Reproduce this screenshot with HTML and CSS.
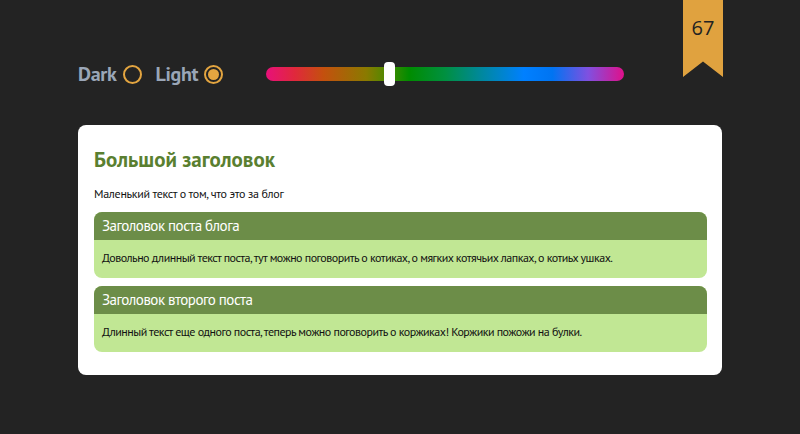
FILE: index.html
```html
<!DOCTYPE html>
<html lang="ru">
<head>
<meta charset="utf-8">
<link rel="stylesheet" href="styles.css">
</head>
<body>
<div class="bookmark">67</div>
<header class="controls">
  <label class="theme">Dark <span class="radio"></span></label>
  <label class="theme">Light <span class="radio checked"></span></label>
  <div class="slider"><span class="thumb"></span></div>
</header>
<main class="card">
  <h1 class="title">Большой заголовок</h1>
  <p class="lead">Маленький текст о том, что это за блог</p>
  <article class="post">
    <h2 class="post-title">Заголовок поста блога</h2>
    <p class="post-body">Довольно длинный текст поста, тут можно поговорить о котиках, о мягких котячьих лапках, о котиьх ушках.</p>
  </article>
  <article class="post">
    <h2 class="post-title">Заголовок второго поста</h2>
    <p class="post-body">Длинный текст еще одного поста, теперь можно поговорить о коржиках! Коржики пожожи на булки.</p>
  </article>
</main>
</body>
</html>
```
FILE: styles.css
```css
html, body { margin: 0; padding: 0; }
body {
  background: #232323;
  width: 800px;
  height: 434px;
  position: relative;
  overflow: hidden;
  font-family: "PT Sans", "Liberation Sans Narrow", "DejaVu Sans Condensed", "Open Sans", sans-serif;
}
.bookmark {
  position: absolute;
  left: 683px;
  top: 0;
  width: 40px;
  height: 77px;
  background: #e0a23f;
  clip-path: polygon(0 0, 100% 0, 100% 100%, 50% 80%, 0 100%);
  color: #222;
  font-size: 20px;
  text-align: center;
  line-height: 56px;
  font-family: "Open Sans", sans-serif;
}
.controls {
  display: flex;
  align-items: center;
  padding: 62px 0 0 78px;
  height: 24px;
}
.theme {
  display: flex;
  align-items: center;
  gap: 6px;
  font-weight: bold;
  font-size: 20px;
  color: #9aa6b7;
  margin-right: 14px;
  letter-spacing: -0.3px;
}
.radio {
  width: 15px;
  height: 15px;
  border: 2px solid #e3a540;
  border-radius: 50%;
  box-sizing: content-box;
  position: relative;
}
.radio.checked::after {
  content: "";
  position: absolute;
  left: 2px; top: 2px;
  width: 11px; height: 11px;
  border-radius: 50%;
  background: #e3a540;
}
.slider {
  margin-left: 29px;
  width: 358px;
  height: 14px;
  border-radius: 7px;
  background: linear-gradient(90deg, #e8107a 0%, #e0283c 8%, #c4500e 16%, #8a7a00 28%, #4a8a00 34%, #008c00 40%, #009040 50%, #00889c 60%, #0080ff 72%, #0074f2 80%, #8050e0 90%, #e0108a 100%);
  position: relative;
}
.thumb {
  position: absolute;
  left: 118px;
  top: -5px;
  width: 11px;
  height: 24px;
  background: #fff;
  border-radius: 4px;
}
.card {
  margin: 39px 78px 0 78px;
  background: #fff;
  border-radius: 8px;
  padding: 20px 15px 23px 16px;
}
.title {
  margin: 0;
  font-size: 21px;
  line-height: 30px;
  color: #5a7f30;
  font-weight: bold;
}
.lead {
  margin: 11px 0 10px;
  font-size: 12px;
  line-height: 16px;
  letter-spacing: -0.3px;
  color: #111;
}
.post {
  border-radius: 8px;
  overflow: hidden;
  background: #c1e794;
  margin-bottom: 8px;
}
.post:last-child { margin-bottom: 0; }
.post-title {
  margin: 0;
  background: #6c8d48;
  color: #fff;
  font-weight: normal;
  font-size: 15px;
  line-height: 28px;
  letter-spacing: -0.5px;
  padding: 0 8px;
}
.post-body {
  margin: 0;
  padding: 10px 8px 12px;
  font-size: 12px;
  line-height: 16px;
  letter-spacing: -0.5px;
  color: #111;
}
```
